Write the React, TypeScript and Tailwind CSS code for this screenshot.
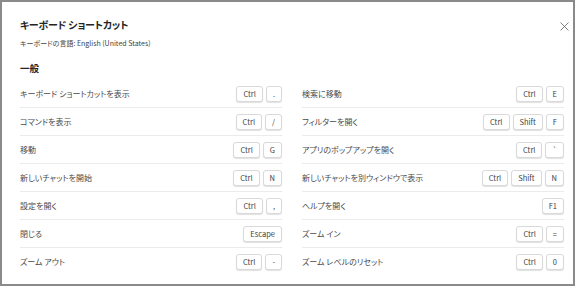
import React from "react";

const left: { label: string; keys: string[] }[] = [
  { label: "キーボード ショートカットを表示", keys: ["Ctrl", "."] },
  { label: "コマンドを表示", keys: ["Ctrl", "/"] },
  { label: "移動", keys: ["Ctrl", "G"] },
  { label: "新しいチャットを開始", keys: ["Ctrl", "N"] },
  { label: "設定を開く", keys: ["Ctrl", ","] },
  { label: "閉じる", keys: ["Escape"] },
  { label: "ズーム アウト", keys: ["Ctrl", "-"] },
];

const right: { label: string; keys: string[] }[] = [
  { label: "検索に移動", keys: ["Ctrl", "E"] },
  { label: "フィルターを開く", keys: ["Ctrl", "Shift", "F"] },
  { label: "アプリのポップアップを開く", keys: ["Ctrl", "`"] },
  { label: "新しいチャットを別ウィンドウで表示", keys: ["Ctrl", "Shift", "N"] },
  { label: "ヘルプを開く", keys: ["F1"] },
  { label: "ズーム イン", keys: ["Ctrl", "="] },
  { label: "ズーム レベルのリセット", keys: ["Ctrl", "0"] },
];

function Key({ k }: { k: string }) {
  return (
    <span className="flex h-[16px] min-w-[16px] items-center justify-center rounded-[3px] border border-[#d9d9d9] bg-white px-[6px] text-[7.5px] leading-none text-[#424242] shadow-[0_1px_1px_rgba(0,0,0,0.12)]">
      {k}
    </span>
  );
}

function Column({ rows }: { rows: { label: string; keys: string[] }[] }) {
  return (
    <div className="flex flex-col">
      {rows.map((r, i) => (
        <div
          key={r.label}
          className={
            "flex h-[28px] items-center justify-between " +
            (i < rows.length - 1 ? "border-b border-[#ebebeb]" : "")
          }
        >
          <span className="text-[8px] text-[#4a4a4a]">{r.label}</span>
          <div className="flex gap-[3px]">
            {r.keys.map((k) => (
              <Key key={k} k={k} />
            ))}
          </div>
        </div>
      ))}
    </div>
  );
}

export default function App() {
  return (
    <div
      className="relative h-[286px] w-[575px] overflow-hidden border-2 border-[#8a8a8a] bg-white pl-[18px] pt-[15px] [font-feature-settings:'palt'] antialiased"
      style={{ fontFamily: '"Noto Sans CJK JP", "Noto Sans", sans-serif' }}
    >
      <button className="absolute right-[4px] top-[19px] flex h-[10px] w-[10px] items-center justify-center text-[#616161]">
        <svg width="9" height="9" viewBox="0 0 9 9" fill="none" stroke="currentColor" strokeWidth="0.8">
          <path d="M0.5 0.5L8.5 8.5M8.5 0.5L0.5 8.5" />
        </svg>
      </button>
      <h1 className="h-[16px] text-[10px] font-bold leading-[16px] tracking-[-0.2px] text-[#242424]">
        キーボード ショートカット
      </h1>
      <p className="mt-[4px] h-[12px] text-[7px] leading-[12px] text-[#424242]">
        キーボードの言語: English (United States)
      </p>
      <h2 className="mt-[12px] h-[14px] text-[9.5px] font-bold leading-[14px] text-[#242424]">一般</h2>
      <div className="mt-[5px] grid grid-cols-[262px_262px] gap-x-[20px]">
        <Column rows={left} />
        <Column rows={right} />
      </div>
    </div>
  );
}
